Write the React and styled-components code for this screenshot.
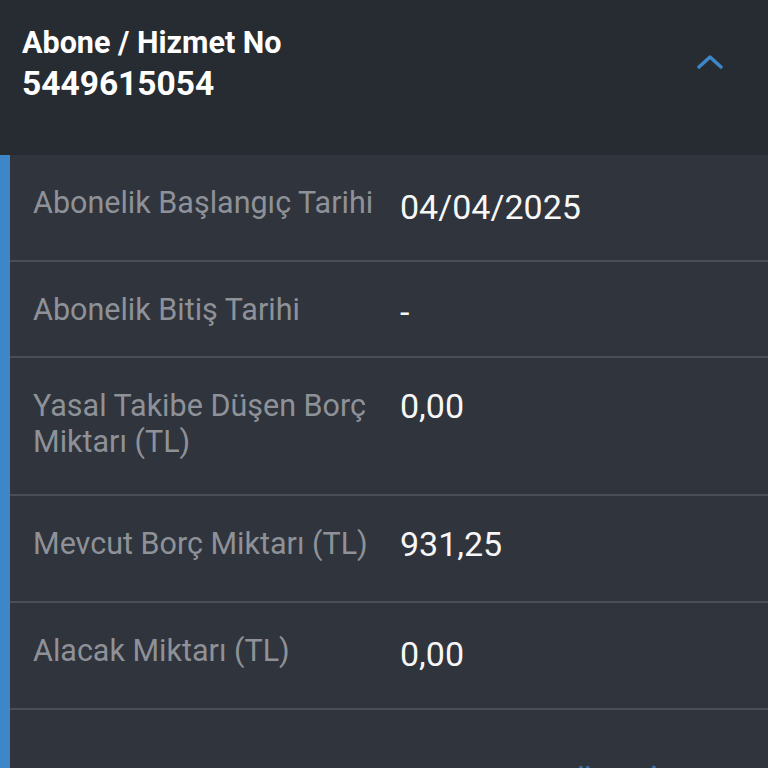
import React from "react";
import styled, { createGlobalStyle } from "styled-components";

const GlobalStyle = createGlobalStyle`
  html, body {
    margin: 0;
    padding: 0;
    background-color: #30343c;
    overflow: hidden;
  }
  * {
    box-sizing: border-box;
  }
`;

const Page = styled.div`
  width: 768px;
  height: 768px;
  overflow: hidden;
  font-family: Roboto, "Liberation Sans", sans-serif;
  background-color: #30343c;
`;

const Header = styled.div`
  height: 155px;
  padding: 24px 44px 0 22px;
  display: flex;
  justify-content: space-between;
  align-items: flex-start;
  background-color: #272b32;
`;

const TitleBlock = styled.div`
  display: flex;
  flex-direction: column;
  color: #ffffff;
  font-weight: bold;
`;

const Title = styled.div`
  font-size: 30.5px;
  line-height: 38px;
`;

const Number = styled.div`
  font-size: 33.5px;
  line-height: 44px;
`;

const Toggle = styled.button`
  margin-top: 26px;
  border: none;
  background: none;
  padding: 0;
  width: 28px;
  height: 24px;
  cursor: pointer;
  display: flex;
  align-items: center;
  justify-content: center;
`;

const Panel = styled.div`
  border-left: 10px solid #3d87c9;
  background-color: #30343c;
`;

const Row = styled.div`
  display: grid;
  grid-template-columns: 345px 1fr;
  column-gap: 22px;
  align-items: start;
  min-height: ${(p) => p.$h}px;
  padding: 30px 20px 0 23px;
  border-bottom: 2px solid #4a4e56;
`;

const Label = styled.div`
  font-size: 30.5px;
  line-height: 36px;
  color: #8e9298;
`;

const Value = styled.div`
  font-size: 34px;
  line-height: 36px;
  color: #f7f7f7;
  margin-top: ${(p) => p.$shift || 0}px;
`;

const Footer = styled.div`
  display: flex;
  justify-content: flex-start;
  padding: 54px 0 0 458px;
`;

const LinkText = styled.span`
  font-size: 30px;
  font-weight: 500;
  color: #3d87c9;
  letter-spacing: 0.5px;
  opacity: 0.7;
`;

const rows = [
  { label: "Abonelik Başlangıç Tarihi", value: "04/04/2025", h: 107, shift: 4 },
  { label: "Abonelik Bitiş Tarihi", value: "-", h: 96, shift: 2 },
  { label: "Yasal Takibe Düşen Borç Miktarı (TL)", value: "0,00", h: 138 },
  { label: "Mevcut Borç Miktarı (TL)", value: "931,25", h: 107 },
  { label: "Alacak Miktarı (TL)", value: "0,00", h: 107, shift: 3 },
];

function Chevron() {
  return (
    <svg width="28" height="16" viewBox="0 0 28 16">
      <path
        d="M3 13 L14 3 L25 13"
        fill="none"
        stroke="#3d87c9"
        strokeWidth="3.5"
        strokeLinecap="round"
        strokeLinejoin="round"
      />
    </svg>
  );
}

function App() {
  return (
    <Page>
      <GlobalStyle />
      <Header>
        <TitleBlock>
          <Title>Abone / Hizmet No</Title>
          <Number>5449615054</Number>
        </TitleBlock>
        <Toggle aria-label="Kapat">
          <Chevron />
        </Toggle>
      </Header>
      <Panel>
        {rows.map((r) => (
          <Row key={r.label} $h={r.h}>
            <Label>{r.label}</Label>
            <Value $shift={r.shift}>{r.value}</Value>
          </Row>
        ))}
        <Footer>
          <LinkText>HESAP ÖZETİ</LinkText>
        </Footer>
      </Panel>
    </Page>
  );
}

export default App;
